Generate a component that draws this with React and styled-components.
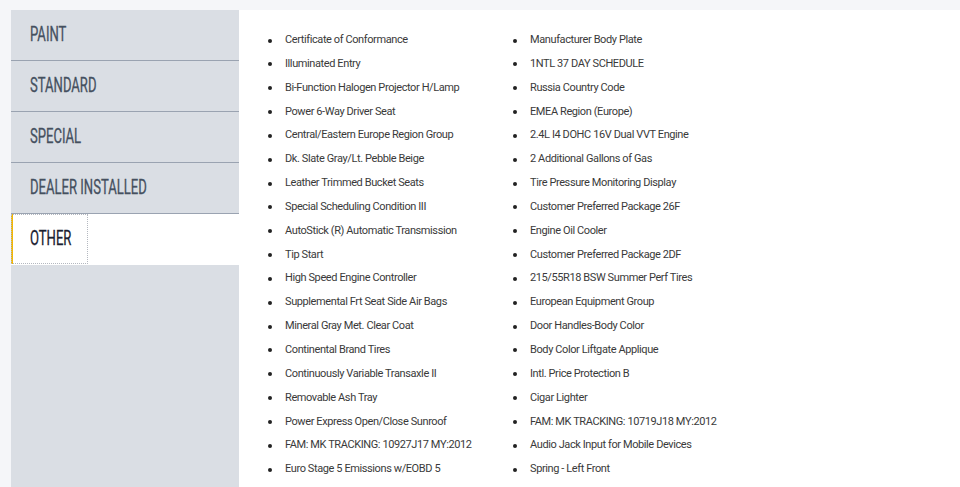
import React from "react";
import styled, { createGlobalStyle } from "styled-components";

const GlobalStyle = createGlobalStyle`
  html, body {
    margin: 0;
    padding: 0;
    background: #f5f6f9;
  }
  body {
    font-family: "Roboto", "Liberation Sans", sans-serif;
  }
`;

const Page = styled.div`
  display: flex;
  padding: 10px 0 0 11px;
  height: 487px;
  box-sizing: border-box;
`;

const Sidebar = styled.nav`
  width: 228px;
  flex-shrink: 0;
  background: #dadee4;
  display: flex;
  flex-direction: column;
`;

const Tab = styled.div`
  height: 50px;
  display: flex;
  align-items: stretch;
  border-bottom: 1px solid ${p => (p.$active ? "transparent" : "#9aa3b1")};
  background: ${p => (p.$active ? "#fff" : "transparent")};
`;

const TabLabel = styled.div`
  display: flex;
  align-items: center;
  box-sizing: border-box;
  padding-left: ${p => (p.$active ? "17px" : "19px")};
  padding-bottom: 2px;
  width: ${p => (p.$active ? "77px" : "auto")};
  border-left: ${p => (p.$active ? "2px solid #f2b705" : "none")};
  outline: ${p => (p.$active ? "1px dotted #b4b8c0" : "none")};
  outline-offset: -1px;
`;

const TabText = styled.span`
  display: inline-block;
  font-family: "Roboto", "Liberation Sans", sans-serif;
  font-weight: 400;
  font-size: 19.5px;
  transform: scaleX(0.67);
  transform-origin: left center;
  white-space: nowrap;
  color: ${p => (p.$active ? "#1a2130" : "#455060")};
  text-transform: uppercase;
  -webkit-text-stroke: 0.3px currentColor;
`;

const Content = styled.main`
  flex: 1;
  background: #fff;
  padding: 18px 0 0 0;
  display: grid;
  grid-template-columns: 245px 260px;
  align-content: start;
`;

const List = styled.ul`
  list-style: none;
  margin: 0;
  padding: 0 0 0 29px;
`;

const Item = styled.li`
  position: relative;
  height: 23.85px;
  line-height: 23.85px;
  padding-left: 17px;
  font-size: 11px;
  letter-spacing: -0.4px;
  color: #3a3a3a;
  white-space: nowrap;

  &::before {
    content: "";
    position: absolute;
    left: 0;
    top: 10.5px;
    width: 4px;
    height: 4px;
    border-radius: 50%;
    background: #222;
  }
`;

const tabs = ["Paint", "Standard", "Special", "Dealer Installed", "Other"];

const left = [
  "Certificate of Conformance",
  "Illuminated Entry",
  "Bi-Function Halogen Projector H/Lamp",
  "Power 6-Way Driver Seat",
  "Central/Eastern Europe Region Group",
  "Dk. Slate Gray/Lt. Pebble Beige",
  "Leather Trimmed Bucket Seats",
  "Special Scheduling Condition III",
  "AutoStick (R) Automatic Transmission",
  "Tip Start",
  "High Speed Engine Controller",
  "Supplemental Frt Seat Side Air Bags",
  "Mineral Gray Met. Clear Coat",
  "Continental Brand Tires",
  "Continuously Variable Transaxle II",
  "Removable Ash Tray",
  "Power Express Open/Close Sunroof",
  "FAM: MK TRACKING: 10927J17 MY:2012",
  "Euro Stage 5 Emissions w/EOBD 5",
];

const right = [
  "Manufacturer Body Plate",
  "1NTL 37 DAY SCHEDULE",
  "Russia Country Code",
  "EMEA Region (Europe)",
  "2.4L I4 DOHC 16V Dual VVT Engine",
  "2 Additional Gallons of Gas",
  "Tire Pressure Monitoring Display",
  "Customer Preferred Package 26F",
  "Engine Oil Cooler",
  "Customer Preferred Package 2DF",
  "215/55R18 BSW Summer Perf Tires",
  "European Equipment Group",
  "Door Handles-Body Color",
  "Body Color Liftgate Applique",
  "Intl. Price Protection B",
  "Cigar Lighter",
  "FAM: MK TRACKING: 10719J18 MY:2012",
  "Audio Jack Input for Mobile Devices",
  "Spring - Left Front",
];

export default function App() {
  return (
    <>
      <GlobalStyle />
      <Page>
        <Sidebar>
          {tabs.map(t => {
            const active = t === "Other";
            return (
              <Tab key={t} $active={active}>
                <TabLabel $active={active}>
                  <TabText $active={active}>{t}</TabText>
                </TabLabel>
              </Tab>
            );
          })}
        </Sidebar>
        <Content>
          <List>
            {left.map(i => (
              <Item key={i}>{i}</Item>
            ))}
          </List>
          <List>
            {right.map(i => (
              <Item key={i}>{i}</Item>
            ))}
          </List>
        </Content>
      </Page>
    </>
  );
}
